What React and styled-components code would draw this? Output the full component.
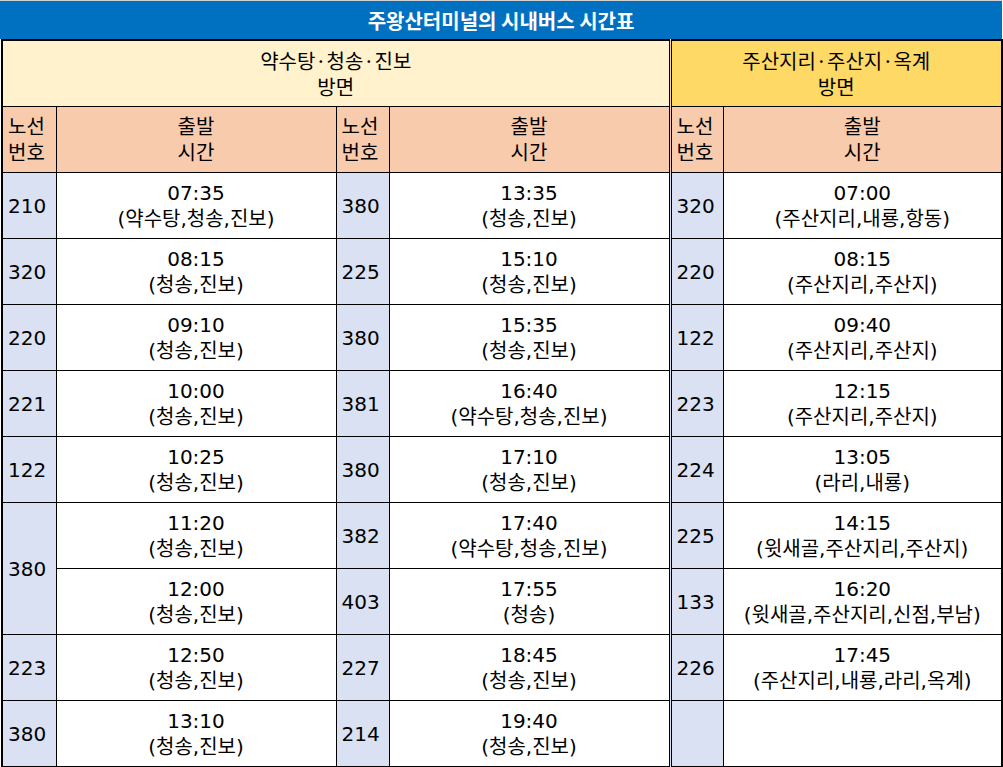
import React from 'react';
import styled, { createGlobalStyle } from 'styled-components';

const GlobalStyle = createGlobalStyle`
  html, body {
    margin: 0;
    padding: 0;
    background: #ffffff;
  }
  body {
    font-family: "Noto Sans CJK KR", "Noto Sans", sans-serif;
    color: #000;
  }
`;

const Page = styled.div`
  width: 1003px;
`;

const Title = styled.div`
  height: 38px;
  width: 1002px;
  border-top: 1px solid #d0d0d0;
  background: #0070c0;
  color: #ffffff;
  font-size: 20px;
  font-weight: 700;
  display: flex;
  align-items: center;
  justify-content: center;
`;

const Table = styled.table`
  margin-left: 1px;
  width: 1001px;
  table-layout: fixed;
  border-collapse: collapse;
  border: 2px solid #000;
  font-family: "DejaVu Sans", "Noto Sans CJK KR", sans-serif;
  font-size: 20px;
  line-height: 26px;
`;

const Cell = styled.td`
  height: 65px;
  padding: 0;
  border: 1px solid #000;
  ${({ $split }) => $split && 'border-left: 3px double #000;'}
  vertical-align: middle;
  white-space: nowrap;
`;

const GroupHead = styled(Cell)`
  background: ${({ $tone }) => ($tone === 'dark' ? '#ffd966' : '#fff2cc')};
  font-family: "Noto Sans CJK KR", sans-serif;
  text-align: center;
`;

const ColHead = styled(Cell)`
  background: #f8cbad;
  text-align: ${({ $left }) => ($left ? 'left' : 'center')};
  padding-left: ${({ $left }) => ($left ? '5px' : '0')};
`;

const RouteCell = styled(Cell)`
  background: #d9e1f2;
  padding-left: 5px;
`;

const TimeCell = styled(Cell)`
  background: #ffffff;
  text-align: center;
`;

const left1 = [
  ['210', '07:35', '(약수탕,청송,진보)'],
  ['320', '08:15', '(청송,진보)'],
  ['220', '09:10', '(청송,진보)'],
  ['221', '10:00', '(청송,진보)'],
  ['122', '10:25', '(청송,진보)'],
  ['380', '11:20', '(청송,진보)', 2],
  [null, '12:00', '(청송,진보)'],
  ['223', '12:50', '(청송,진보)'],
  ['380', '13:10', '(청송,진보)'],
];

const left2 = [
  ['380', '13:35', '(청송,진보)'],
  ['225', '15:10', '(청송,진보)'],
  ['380', '15:35', '(청송,진보)'],
  ['381', '16:40', '(약수탕,청송,진보)'],
  ['380', '17:10', '(청송,진보)'],
  ['382', '17:40', '(약수탕,청송,진보)'],
  ['403', '17:55', '(청송)'],
  ['227', '18:45', '(청송,진보)'],
  ['214', '19:40', '(청송,진보)'],
];

const right = [
  ['320', '07:00', '(주산지리,내룡,항동)'],
  ['220', '08:15', '(주산지리,주산지)'],
  ['122', '09:40', '(주산지리,주산지)'],
  ['223', '12:15', '(주산지리,주산지)'],
  ['224', '13:05', '(라리,내룡)'],
  ['225', '14:15', '(윗새골,주산지리,주산지)'],
  ['133', '16:20', '(윗새골,주산지리,신점,부남)'],
  ['226', '17:45', '(주산지리,내룡,라리,옥계)'],
  ['', '', ''],
];

const Pair = ({ row, split }) => {
  const [route, time, via, span] = row;
  return (
    <>
      {route !== null && (
        <RouteCell $split={split} rowSpan={span || 1}>
          {route}
        </RouteCell>
      )}
      <TimeCell>
        {time}
        {via && <br />}
        {via}
      </TimeCell>
    </>
  );
};

const App = () => {
  return (
    <Page>
      <GlobalStyle />
      <Title>주왕산터미널의 시내버스 시간표</Title>
      <Table>
        <colgroup>
          <col style={{ width: 54 }} />
          <col style={{ width: 280 }} />
          <col style={{ width: 53 }} />
          <col style={{ width: 281 }} />
          <col style={{ width: 53 }} />
          <col style={{ width: 279 }} />
        </colgroup>
        <tbody>
          <tr>
            <GroupHead colSpan={4}>
              약수탕·청송·진보
              <br />
              방면
            </GroupHead>
            <GroupHead colSpan={2} $tone="dark" $split>
              주산지리·주산지·옥계
              <br />
              방면
            </GroupHead>
          </tr>
          <tr>
            <ColHead $left>노선<br />번호</ColHead>
            <ColHead>출발<br />시간</ColHead>
            <ColHead $left>노선<br />번호</ColHead>
            <ColHead>출발<br />시간</ColHead>
            <ColHead $left $split>노선<br />번호</ColHead>
            <ColHead>출발<br />시간</ColHead>
          </tr>
          {left1.map((row, i) => (
            <tr key={i}>
              <Pair row={row} />
              <Pair row={left2[i]} />
              <Pair row={right[i]} split />
            </tr>
          ))}
        </tbody>
      </Table>
    </Page>
  );
};

export default App;
